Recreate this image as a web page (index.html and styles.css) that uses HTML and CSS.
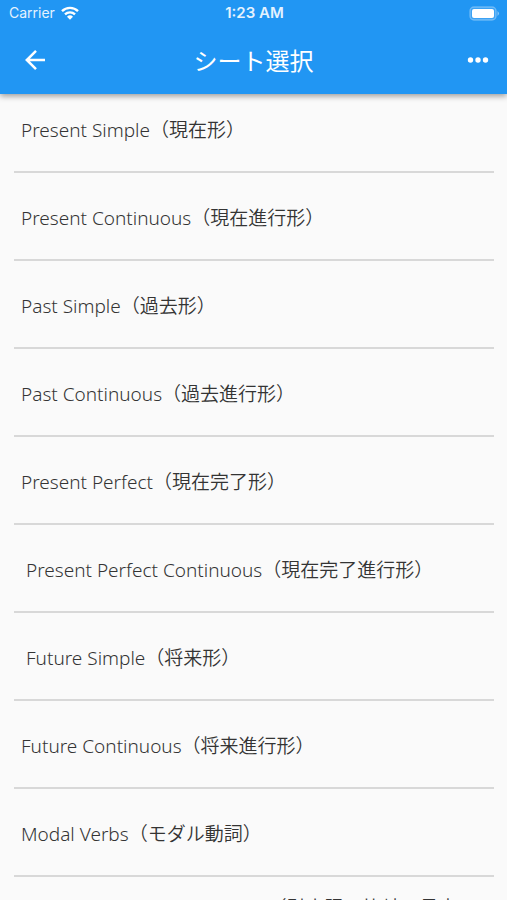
FILE: index.html
```html
<!DOCTYPE html>
<html lang="ja">
<head>
<meta charset="utf-8">
<meta name="viewport" content="width=device-width, initial-scale=1">
<title>シート選択</title>
<link rel="stylesheet" href="styles.css">
</head>
<body>
<header class="top">
  <div class="status">
    <span class="carrier">Carrier
      <svg class="wifi" viewBox="0 0 18 14" aria-hidden="true"><g fill="none" stroke="currentColor" stroke-width="2.4"><path d="M1 5.2a11.4 11.4 0 0 1 16 0"/><path d="M4 8.4a7.2 7.2 0 0 1 10 0"/></g><path fill="currentColor" d="M6 10.7a4.3 4.3 0 0 1 6 0L9 13.8z"/></svg>
    </span>
    <span class="time">1:23 AM</span>
    <svg class="battery" viewBox="0 0 32 15" aria-hidden="true"><rect x="2" y="1" width="26" height="13" rx="4" fill="#fff" fill-opacity=".12" stroke="#fff" stroke-opacity=".3" stroke-width="1.4"/><rect x="4" y="3" width="22" height="9" rx="2" fill="#fff"/><path d="M29.500 5q3 2.500 0 5z" fill="#fff" fill-opacity=".45"/></svg>
  </div>
  <div class="bar">
    <button class="icon-button" type="button" aria-label="戻る"><svg viewBox="0 0 24 24"><path fill="none" stroke="currentColor" stroke-width="2.500" d="M22 12H4M13 2.800L3.800 12l9.200 9.200"/></svg></button>
    <h1>シート選択</h1>
    <button class="icon-button" type="button" aria-label="メニュー"><svg viewBox="0 0 24 24"><g fill="currentColor"><circle cx="4.500" cy="12" r="2.700"/><circle cx="12" cy="12" r="2.700"/><circle cx="19.500" cy="12" r="2.700"/></g></svg></button>
  </div>
</header>
<main>
  <ul class="sheets">
    <li><a href="#">Present Simple（現在形）</a></li>
    <li><a href="#">Present Continuous（現在進行形）</a></li>
    <li><a href="#">Past Simple（過去形）</a></li>
    <li><a href="#">Past Continuous（過去進行形）</a></li>
    <li><a href="#">Present Perfect（現在完了形）</a></li>
    <li><a class="indent" href="#">Present Perfect Continuous（現在完了進行形）</a></li>
    <li><a class="indent" href="#">Future Simple（将来形）</a></li>
    <li><a href="#">Future Continuous（将来進行形）</a></li>
    <li><a href="#">Modal Verbs（モダル動詞）</a></li>
    <li><a href="#">Comparatives &amp; Superlatives（引小限の比較の見方、応用）</a></li>
  </ul>
</main>
</body>
</html>
```
FILE: styles.css
```css
* { box-sizing: border-box; }
html, body { height: 100%; }
body {
  margin: 0;
  display: flex;
  flex-direction: column;
  overflow: hidden;
  background: #fafafa;
  color: #343434;
  font-family: "Noto Sans", "Noto Sans CJK JP DemiLight", "Noto Sans CJK JP", sans-serif;
  font-weight: 300;
}
.top {
  flex: none;
  position: relative;
  background: #2196f3;
  color: #fff;
  box-shadow: 0 2px 6px rgba(0, 0, 0, .4);
}
.status {
  display: grid;
  grid-template-columns: 1fr auto 1fr;
  align-items: center;
  height: 26px;
  padding: 0 7px 0 9px;
  font: 14px/26px Inter, sans-serif;
}
.carrier { display: flex; align-items: center; gap: 6px; color: #e4f2fe; }
.wifi { width: 18px; height: 14px; color: #fff; }
.time { font-weight: 600; font-size: 15px; color: #e4f2fe; }
.battery { width: 32px; height: 15px; justify-self: end; }
.bar {
  display: grid;
  grid-template-columns: 40px 1fr 40px;
  align-items: center;
  height: 68px;
  padding: 0 9px 0 15px;
}
h1 {
  margin: 0;
  padding-right: 6px;
  text-align: center;
  font: 400 24px/36px "Noto Sans CJK JP", sans-serif;
}
.icon-button {
  display: grid;
  place-items: center;
  width: 40px;
  height: 40px;
  padding: 0;
  border: 0;
  background: none;
  color: #fff;
}
.icon-button svg { width: 24px; height: 24px; }
.sheets {
  margin: -9px 0 0;
  padding: 0 13px 0 14px;
  list-style: none;
}
.sheets li { border-bottom: 2px solid #d8d8d8; }
.sheets a {
  display: flex;
  align-items: center;
  min-height: 86px;
  padding: 4px 7px 0;
  color: inherit;
  text-decoration: none;
  font-size: 19px;
  line-height: 28px;
}
.sheets .indent { padding-left: 12px; }
```
